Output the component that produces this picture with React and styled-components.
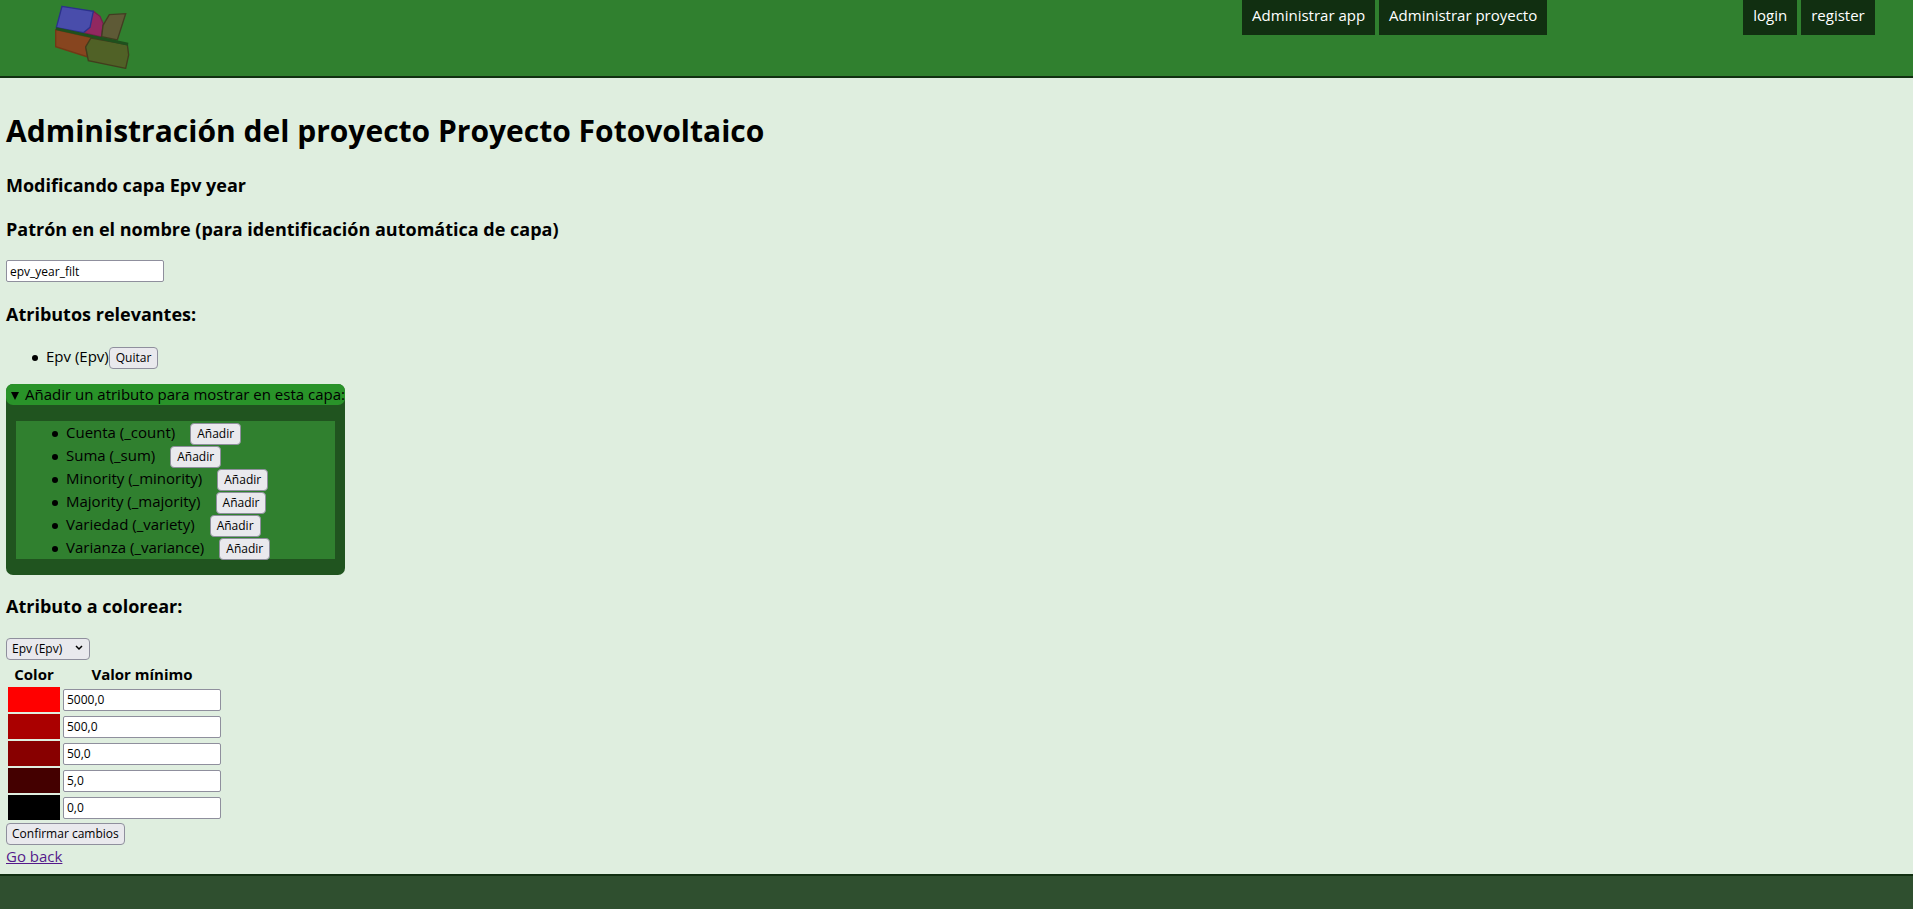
import React from "react";
import styled, { createGlobalStyle } from "styled-components";

const GlobalStyle = createGlobalStyle`
  *, *::before, *::after { box-sizing: border-box; }
  body {
    margin: 0;
    background: #2f4f2f;
    color: #000;
    font-family: "Segoe UI", "Open Sans", sans-serif;
    font-size: 15px;
    line-height: 21px;
  }
`;

const Page = styled.div`
  display: flex;
  flex-direction: column;
  min-height: 100vh;
`;

const Header = styled.header`
  display: flex;
  align-items: flex-start;
  height: 78px;
  padding: 0 2%;
  background: #30802f;
  border-bottom: 2px solid #112f11;
`;

const Logo = styled.svg`
  width: 75px;
  height: 64px;
  margin: 5px auto 0 17px;
`;

const Nav = styled.nav`
  display: flex;
  gap: 4px;
  margin-left: ${(p) => (p.$spaced ? "196px" : "0")};
`;

const NavLink = styled.a`
  height: 35px;
  padding: 5px 10px;
  background: #112f11;
  color: #fff;
  text-decoration: none;
`;

const Main = styled.main`
  padding: 31px 6px 7px;
  background: #dfeedf;
`;

const Title = styled.h1`
  margin: 0 0 20px;
  font-size: 30px;
  line-height: 43px;
`;

const Heading = styled.h3`
  margin: 0 0 18px;
  padding-top: 1px;
  font-size: 18px;
  line-height: 25px;
`;

const TextInput = styled.input`
  display: block;
  width: 158px;
  height: 22px;
  margin-bottom: ${(p) => p.$gap || 0}px;
  padding: 0 3px;
  border: 1px solid #8f8f9d;
  border-radius: 2px;
  background: #fff;
  color: #000;
  font: 12px "Open Sans", sans-serif;
`;

const Button = styled.button`
  height: 22px;
  padding: 0 5px;
  border: 1px solid #8f8f9d;
  border-radius: 4px;
  background: #e9e9ed;
  color: #000;
  font: 12px "Open Sans", sans-serif;
`;

const AttributeList = styled.ul`
  margin: 0 0 16px;
  padding-left: 40px;
  list-style: none;
`;

const AttributeItem = styled.li`
  height: 23px;
  line-height: 23px;

  &::before {
    content: "";
    display: inline-block;
    width: 6px;
    height: 6px;
    margin: 0 8px 0 -14px;
    border-radius: 50%;
    background: #000;
    vertical-align: middle;
  }

  ${Button} {
    margin-left: ${(p) => p.$gap || 0}px;
    padding: 0 6px;
    vertical-align: middle;
  }
`;

const AddPanel = styled.details`
  width: 339px;
  margin-bottom: 18px;
  padding-bottom: 16px;
  border-radius: 7px;
  background: #20541f;

  ${AttributeList} {
    margin: 16px 10px 0;
    padding-left: 50px;
    background: #30802f;
  }
`;

const AddSummary = styled.summary`
  padding-left: 5px;
  border-radius: 7px;
  background: #299329;
  line-height: 21px;
  list-style: none;
  white-space: nowrap;

  &::before {
    content: "";
    display: inline-block;
    margin-right: 6px;
    border: 4px solid transparent;
    border-top: 8px solid #000;
    border-bottom: 0;
    vertical-align: baseline;
  }
`;

const SelectWrap = styled.div`
  position: relative;
  width: 84px;
  height: 22px;
  margin-bottom: 2px;

  svg {
    position: absolute;
    top: 8px;
    right: 7px;
    width: 8px;
    height: 6px;
    pointer-events: none;
  }
`;

const Select = styled.select`
  appearance: none;
  width: 100%;
  height: 100%;
  padding: 0 5px;
  border: 1px solid #8f8f9d;
  border-radius: 4px;
  background: #e9e9ed;
  color: #000;
  font: 12px "Open Sans", sans-serif;
`;

const ColorTable = styled.table`
  border-spacing: 2px;

  th { height: 22px; padding: 0; }
  td { height: 25px; padding: 0 1px; }
`;

const Swatch = styled.td`
  width: 52px;
  background: ${(p) => p.$color};
`;

const BackLink = styled.a`
  display: table;
  margin-top: 1px;
  color: #551a8b;
`;

const Footer = styled.footer`
  flex: 1;
  min-height: 35px;
  border-top: 2px solid #112f11;
  background: #2f4f2f;
`;

const available = [
  "Cuenta (_count)",
  "Suma (_sum)",
  "Minority (_minority)",
  "Majority (_majority)",
  "Variedad (_variety)",
  "Varianza (_variance)",
];

const ranges = [
  ["#ff0000", "5000,0"],
  ["#aa0000", "500,0"],
  ["#880000", "50,0"],
  ["#440000", "5,0"],
  ["#000000", "0,0"],
];

export default function App() {
  return (
    <Page>
      <GlobalStyle />
      <Header>
        <Logo viewBox="75 15 225 192" aria-hidden="true" strokeWidth="4">
          <path d="M190 34L210 49L220 72L214 111L158 98Z" fill="#912860" stroke="#74204d" />
          <path d="M96 19L190 34L180 82L160 98L79 83Z" fill="#494dab" stroke="#2b318b" />
          <path d="M238 44L287 41L262 120L215 110L219 76Z" fill="#5e5a36" stroke="#423d22" />
          <path d="M77 89L184 113L167 140L173 171L77 140Z" fill="#87451f" stroke="#713916" />
          <path d="M183 114L292 134L296 165L287 205L175 182L167 141Z" fill="#506126" stroke="#423d1d" />
          <path d="M79 82L295 128L294 137L77 90Z" fill="#1f501d" />
        </Logo>
        <Nav aria-label="Administración">
          <NavLink href="#app">Administrar app</NavLink>
          <NavLink href="#proyecto">Administrar proyecto</NavLink>
        </Nav>
        <Nav $spaced aria-label="Cuenta">
          <NavLink href="#login">login</NavLink>
          <NavLink href="#register">register</NavLink>
        </Nav>
      </Header>

      <Main>
        <Title>Administración del proyecto Proyecto Fotovoltaico</Title>
        <Heading>Modificando capa Epv year</Heading>
        <Heading id="pattern">Patrón en el nombre (para identificación automática de capa)</Heading>
        <TextInput type="text" aria-labelledby="pattern" defaultValue="epv_year_filt" $gap={19} />

        <Heading>Atributos relevantes:</Heading>
        <AttributeList>
          <AttributeItem>
            Epv (Epv)<Button type="button">Quitar</Button>
          </AttributeItem>
        </AttributeList>

        <AddPanel open>
          <AddSummary>Añadir un atributo para mostrar en esta capa:</AddSummary>
          <AttributeList>
            {available.map((name) => (
              <AttributeItem key={name} $gap={15}>
                {name}
                <Button type="button">Añadir</Button>
              </AttributeItem>
            ))}
          </AttributeList>
        </AddPanel>

        <Heading id="colored">Atributo a colorear:</Heading>
        <SelectWrap>
          <Select aria-labelledby="colored" defaultValue="epv">
            <option value="epv">Epv (Epv)</option>
          </Select>
          <svg viewBox="0 0 8 6" aria-hidden="true">
            <path d="M1 1L4 4L7 1" fill="none" stroke="#000" strokeWidth="1.5" />
          </svg>
        </SelectWrap>
        <ColorTable>
          <thead>
            <tr>
              <th scope="col">Color</th>
              <th scope="col" id="minimum">Valor mínimo</th>
            </tr>
          </thead>
          <tbody>
            {ranges.map(([color, value]) => (
              <tr key={color}>
                <Swatch $color={color} />
                <td>
                  <TextInput type="text" aria-labelledby="minimum" defaultValue={value} />
                </td>
              </tr>
            ))}
          </tbody>
        </ColorTable>
        <Button type="submit">Confirmar cambios</Button>
        <BackLink href="#back">Go back</BackLink>
      </Main>
      <Footer />
    </Page>
  );
}
